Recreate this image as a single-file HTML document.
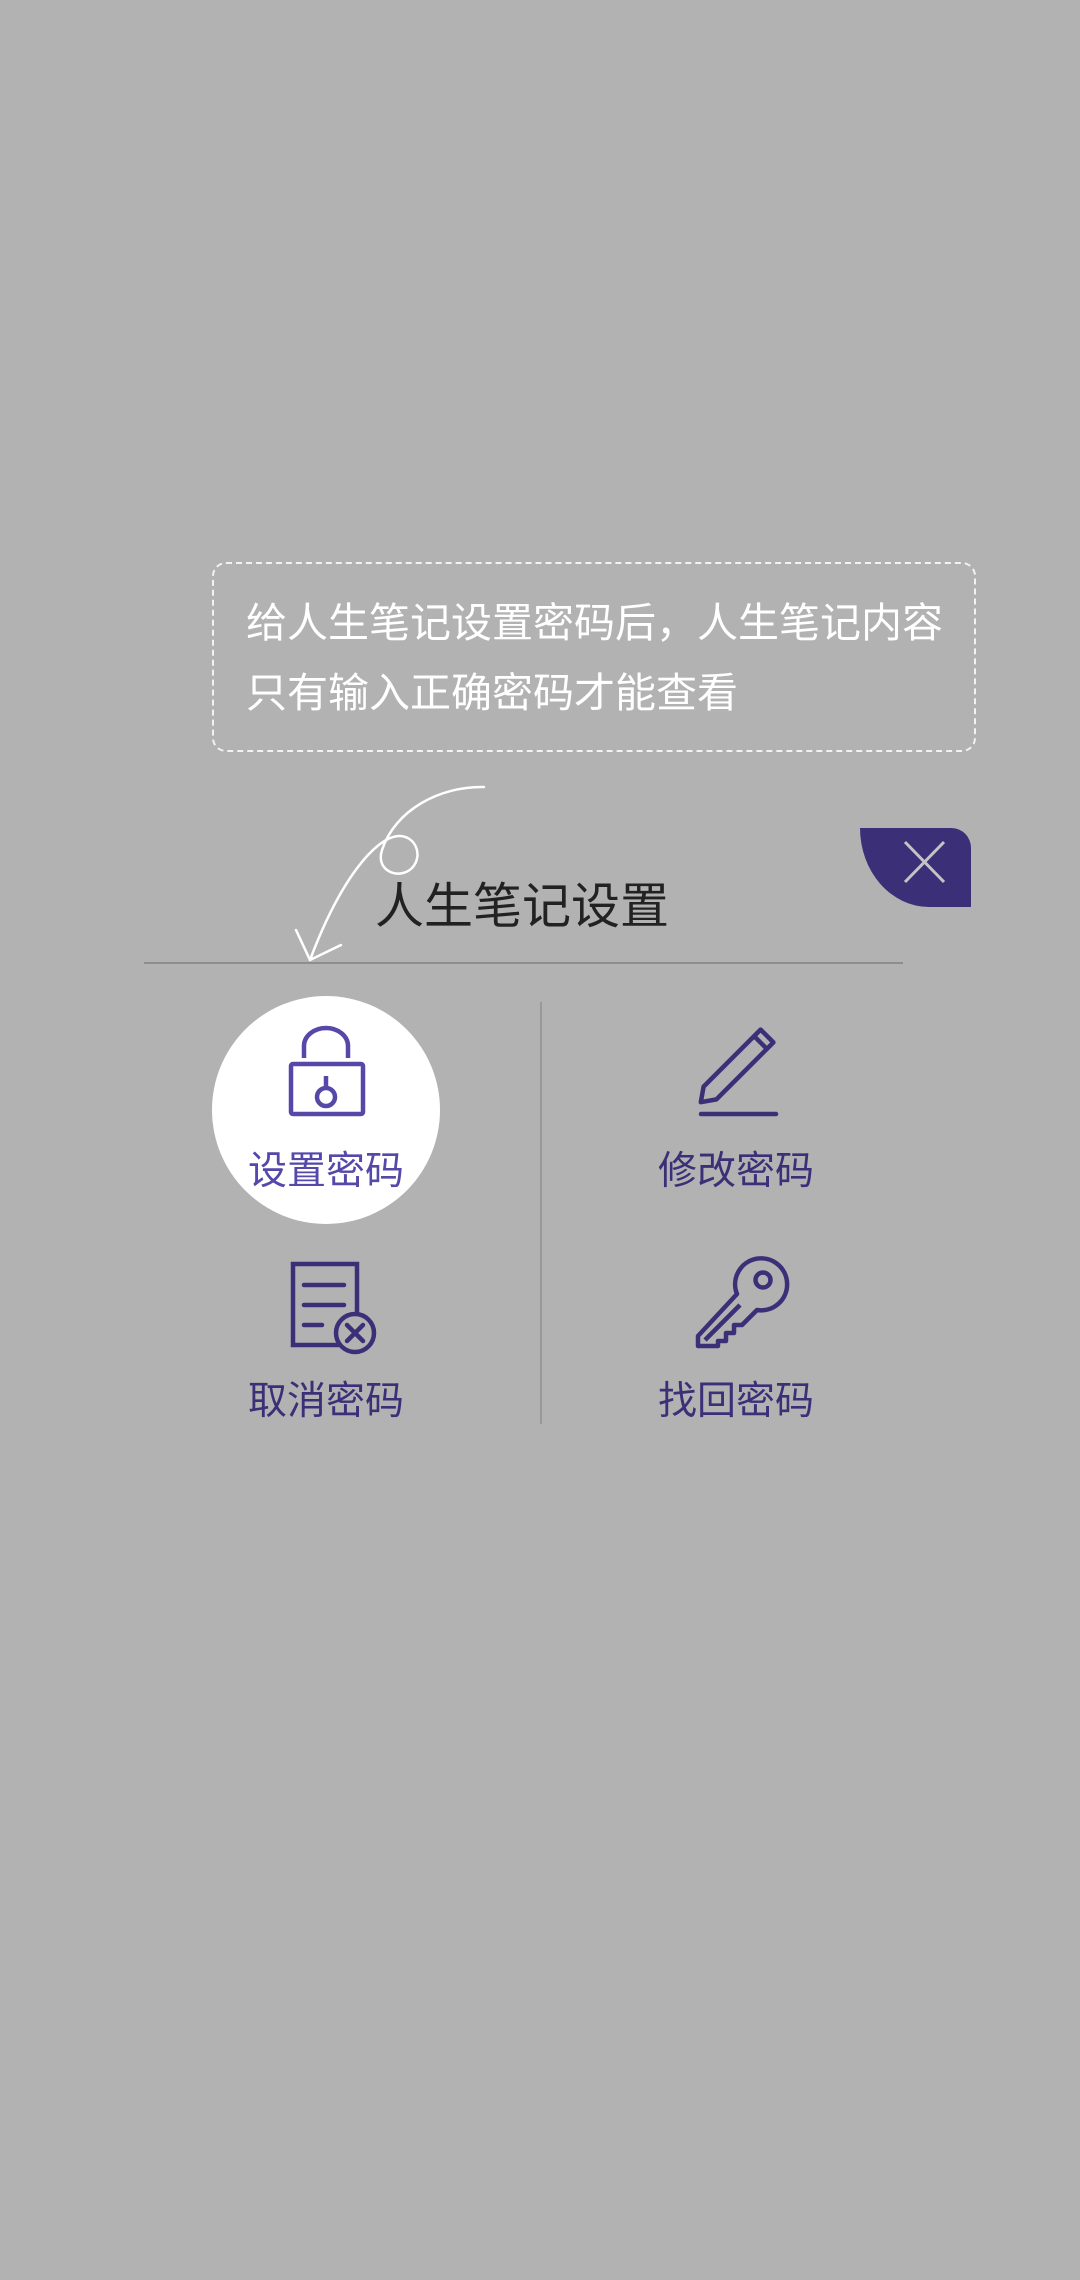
<!DOCTYPE html>
<html><head><meta charset="utf-8">
<style>
html,body{margin:0;padding:0;}
body{width:1080px;height:2280px;background:#b2b2b2;position:relative;overflow:hidden;font-family:"Liberation Sans","Noto Sans CJK SC",sans-serif;}
.abs{position:absolute;}
.box{left:212px;top:562px;width:764px;height:190px;border:2px dashed #f2f2f2;border-radius:14px;box-sizing:border-box;}
.t{color:#fff;font-size:41px;white-space:nowrap;line-height:50px;}
.title{left:375px;top:878px;font-size:49px;color:#222;line-height:58px;white-space:nowrap;}
.hr{left:144px;top:962px;width:759px;height:2px;background:#8e8e8e;}
.vr{left:540px;top:1002px;width:2px;height:422px;background:#999;}
.close{left:860px;top:828px;width:111px;height:79px;background:#3b3078;border-radius:0 20px 0 70px/0 20px 0 80px;}
.circle{left:212px;top:996px;width:228px;height:228px;border-radius:50%;background:#fff;}
.lab{font-size:39px;line-height:46px;white-space:nowrap;width:200px;text-align:center;color:#3b3078;}
</style></head><body>
<div class="abs box"></div>
<div class="abs t" style="left:246px;top:598px;">给人生笔记设置密码后，人生笔记内容</div>
<div class="abs t" style="left:246px;top:668px;">只有输入正确密码才能查看</div>
<div class="abs title">人生笔记设置</div>
<div class="abs hr"></div>
<div class="abs close"></div>
<div class="abs vr"></div>
<div class="abs circle"></div>
<div class="abs lab" style="left:226px;top:1149px;color:#5548a8;">设置密码</div>
<div class="abs lab" style="left:636px;top:1149px;">修改密码</div>
<div class="abs lab" style="left:226px;top:1379px;">取消密码</div>
<div class="abs lab" style="left:636px;top:1379px;">找回密码</div>
<svg class="abs" style="left:0;top:0" width="1080" height="2280" viewBox="0 0 1080 2280" fill="none">
 <path d="M484,787 C440,786 395,810 382,850 C375,872 400,880 412,868 C424,855 415,835 398,836 C375,838 340,880 310,960" stroke="#fff" stroke-width="2.5" stroke-linecap="round"/>
 <path d="M296,930 L310,960 L341,945" stroke="#fff" stroke-width="2.5" stroke-linecap="round" stroke-linejoin="round"/>
 <path d="M905,842 L944,882 M944,842 L905,882" stroke="#c4c4c4" stroke-width="3"/>
 <g stroke="#5548a8" stroke-width="4.5">
  <path d="M304,1058 V1046 A22,18 0 0 1 348,1046 V1058"/>
  <rect x="291" y="1064" width="72" height="50" rx="2"/>
  <path d="M326,1076 V1090"/>
  <circle cx="326" cy="1097" r="9"/>
 </g>
 <g stroke="#3b3078" stroke-width="4.5" stroke-linejoin="round">
  <path d="M703.6,1086.6 L760.6,1029.6 L773.4,1042.4 L716.4,1099.4 L700.8,1102.2 Z"/>
  <path d="M754,1036 L767,1049"/>
  <path d="M701,1114 H776" stroke-linecap="round"/>
 </g>
 <g stroke="#3b3078" stroke-width="4.5" stroke-linecap="round">
  <path d="M338,1345 H293 V1264 H357 V1312"/>
  <path d="M304,1285 H344 M304,1305 H344 M304,1325 H322"/>
  <circle cx="355" cy="1333" r="19"/>
  <path d="M347,1325 L363,1341 M363,1325 L347,1341"/>
 </g>
 <g stroke="#3b3078" stroke-width="4.5" stroke-linejoin="round">
  <path d="M737,1294 A26,26 0 1 1 757,1310 L742,1325 H734 V1333 H726 V1341 H718 V1346 H698 V1336 Z"/>
  <circle cx="763" cy="1280" r="7.5"/>
  <path d="M705,1340 L740,1305"/>
 </g>
</svg>
</body></html>
